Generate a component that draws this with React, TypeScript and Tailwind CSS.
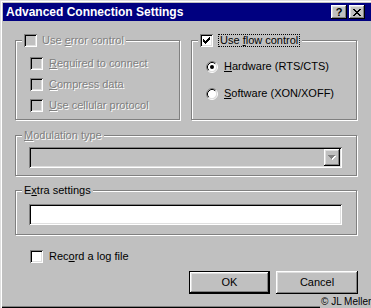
import React from "react";

const sunken =
  "shadow-[inset_1px_1px_0_#808080,inset_-1px_-1px_0_#fff,inset_2px_2px_0_#000,inset_-2px_-2px_0_#dfdfdf]";
const raised =
  "shadow-[inset_-1px_-1px_0_#000,inset_1px_1px_0_#fff,inset_-2px_-2px_0_#808080,inset_2px_2px_0_#dfdfdf]";
const etched = "border border-[#808080] shadow-[inset_1px_1px_0_#fff,1px_1px_0_#fff]";
const dim = "text-[#808080] [text-shadow:1px_1px_0_#fff]";

function CheckBox({ checked = false, disabled = false }: { checked?: boolean; disabled?: boolean }) {
  return (
    <div className={`relative w-[13px] h-[13px] shrink-0 ${sunken} ${disabled ? "bg-[#c0c0c0]" : "bg-white"}`}>
      {checked && (
        <svg className="absolute left-[3px] top-[3px]" width="7" height="7" viewBox="0 0 7 7">
          <path
            fill="#000"
            d="M6 0h1v1h-1z M5 1h2v1h-2z M0 2h1v1h-1z M4 2h3v1h-3z M0 3h2v1h-2z M3 3h3v1h-3z M0 4h5v1h-5z M1 5h3v1h-3z M2 6h1v1h-1z"
          />
        </svg>
      )}
    </div>
  );
}

function Radio({ checked = false }: { checked?: boolean }) {
  return (
    <svg width="12" height="12" viewBox="0 0 12 12" className="shrink-0">
      <circle cx="6" cy="6" r="4.5" fill="#fff" />
      <path d="M2.11 9.89 A5.5 5.5 0 0 1 9.89 2.11" stroke="#808080" fill="none" />
      <path d="M9.89 2.11 A5.5 5.5 0 0 1 2.11 9.89" stroke="#fff" fill="none" />
      <path d="M2.82 9.18 A4.5 4.5 0 0 1 9.18 2.82" stroke="#000" fill="none" />
      <path d="M9.18 2.82 A4.5 4.5 0 0 1 2.82 9.18" stroke="#dfdfdf" fill="none" />
      {checked && <circle cx="6" cy="6" r="2" fill="#000" />}
    </svg>
  );
}

function Legend({ children }: { children: React.ReactNode }) {
  return (
    <div className="-mt-[7px] ml-[6px] px-[2px] w-fit h-[13px] bg-[#c0c0c0] flex items-center gap-[5px] leading-[13px]">
      {children}
    </div>
  );
}

export default function App() {
  return (
    <div className="relative w-[371px] h-[308px] overflow-hidden bg-[#c0c0c0] font-['Liberation_Sans',Arial,sans-serif] text-[11px] leading-[13px] text-black shadow-[inset_1px_1px_0_#dfdfdf,inset_2px_2px_0_#fff,inset_0_-1px_0_#000,inset_0_-2px_0_#808080]">
      {/* title bar */}
      <div className="ml-[3px] mt-[3px] h-[18px] bg-[#000080] flex items-center pl-[3px] pr-[6px]">
        <span className="text-white font-bold text-[12px] leading-[14px]">Advanced Connection Settings</span>
        <div className="ml-auto flex gap-[2px]">
          <div className={`w-[16px] h-[14px] bg-[#c0c0c0] ${raised} flex items-center justify-center font-bold text-[11px] leading-[11px]`}>
            ?
          </div>
          <div className={`w-[16px] h-[14px] bg-[#c0c0c0] ${raised} flex items-center justify-center`}>
            <svg width="8" height="7" viewBox="0 0 8 7">
              <path
                fill="#000"
                d="M0 0h2v1h-2z M6 0h2v1h-2z M1 1h2v1h-2z M5 1h2v1h-2z M2 2h4v1h-4z M3 3h2v1h-2z M2 4h4v1h-4z M1 5h2v1h-2z M5 5h2v1h-2z M0 6h2v1h-2z M6 6h2v1h-2z"
              />
            </svg>
          </div>
        </div>
      </div>

      <div className="ml-[15px] w-[343px]">
        {/* top groups */}
        <div className="mt-[19px] flex gap-[11px]">
          <div className={`w-[165px] h-[80px] ${etched}`}>
            <Legend>
              <CheckBox disabled />
              <span className={dim}>
                Use <u>e</u>rror control
              </span>
            </Legend>
            <div className="mt-[10px] pl-[14px] flex flex-col gap-[8px]">
              {[
                ["R", "equired to connect"],
                ["C", "ompress data"],
                ["U", "se cellular protocol"],
              ].map(([k, rest]) => (
                <div key={k + rest} className="flex items-center gap-[6px] h-[13px]">
                  <CheckBox disabled />
                  <span className={dim}>
                    <u>{k}</u>
                    {rest}
                  </span>
                </div>
              ))}
            </div>
          </div>
          <div className={`w-[166px] h-[80px] ${etched}`}>
            <Legend>
              <CheckBox checked />
              <span className="border border-dotted border-black px-[1px] leading-[11px]">
                Use <u>f</u>low control
              </span>
            </Legend>
            <div className="mt-[13px] pl-[14px] flex flex-col gap-[14px]">
              <div className="flex items-center gap-[6px] h-[13px]">
                <Radio checked />
                <span>
                  <u>H</u>ardware (RTS/CTS)
                </span>
              </div>
              <div className="flex items-center gap-[6px] h-[13px]">
                <Radio />
                <span>
                  <u>S</u>oftware (XON/XOFF)
                </span>
              </div>
            </div>
          </div>
        </div>

        {/* modulation */}
        <div className={`mt-[15px] w-[342px] h-[41px] ${etched}`}>
          <Legend>
            <span className={dim}>
              <u>M</u>odulation type
            </span>
          </Legend>
          <div className={`mt-[5px] ml-[13px] w-[313px] h-[21px] ${sunken} bg-[#c0c0c0] flex justify-end p-[2px]`}>
            <div className={`w-[16px] h-[17px] bg-[#c0c0c0] ${raised} flex items-center justify-center`}>
              <svg width="8" height="5" viewBox="0 0 8 5">
                <path fill="#fff" d="M1 1h7v1h-1v1h-1v1h-1v1h-1v-1h-1v-1h-1v-1h-1z" />
                <path fill="#808080" d="M0 0h7v1h-1v1h-1v1h-1v1h-1v-1h-1v-1h-1v-1h-1z" />
              </svg>
            </div>
          </div>
        </div>

        {/* extra settings */}
        <div className={`mt-[14px] w-[342px] h-[45px] ${etched}`}>
          <Legend>
            <span>
              E<u>x</u>tra settings
            </span>
          </Legend>
          <div className={`mt-[7px] ml-[13px] w-[313px] h-[21px] ${sunken} bg-white`} />
        </div>

        <div className="mt-[15px] ml-[15px] flex items-center gap-[6px] h-[13px]">
          <CheckBox />
          <span>
            Rec<u>o</u>rd a log file
          </span>
        </div>

        <div className="mt-[8px] flex justify-end gap-[6px]">
          <div className="w-[81px] h-[23px] border border-black">
            <div className={`w-full h-full ${raised} bg-[#c0c0c0] flex items-center justify-center`}>OK</div>
          </div>
          <div className={`w-[82px] h-[23px] ${raised} bg-[#c0c0c0] flex items-center justify-center`}>Cancel</div>
        </div>
      </div>

      <div className="absolute left-[320px] top-[296px] bg-[#c0c0c0] pl-[1px] text-[10px] leading-[12px] whitespace-nowrap">
        © JL Meller
      </div>
    </div>
  );
}
